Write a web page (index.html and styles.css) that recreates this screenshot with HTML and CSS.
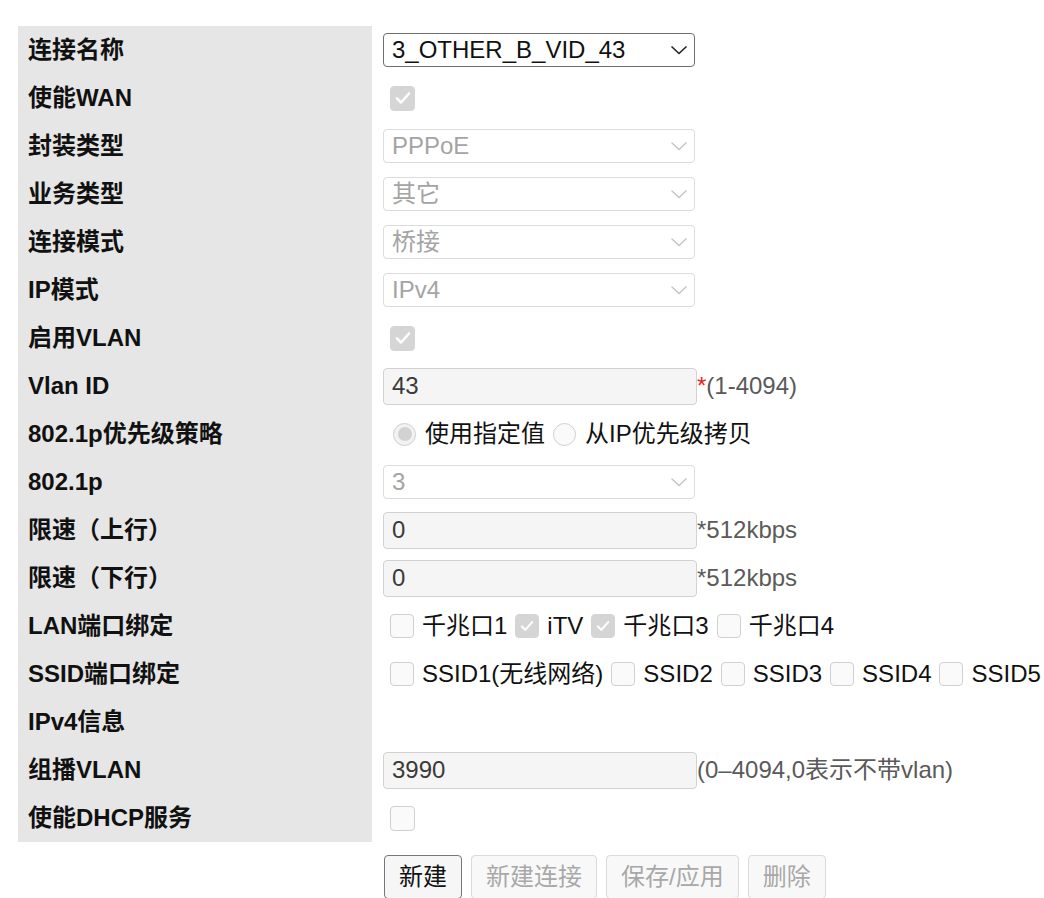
FILE: index.html
```html
<!DOCTYPE html>
<html lang="zh-CN">
<head>
<meta charset="utf-8">
<title>WAN 连接</title>
<link rel="stylesheet" href="styles.css">
</head>
<body>
<div class="page">
  <div class="form">
    <div class="row">
      <div class="label">连接名称</div>
      <div class="value">
        <div class="select active"><span>3_OTHER_B_VID_43</span><svg class="chev" width="18" height="10" viewBox="0 0 18 10"><polyline points="1.5,1.5 9,8.5 16.5,1.5" fill="none" stroke="currentColor" stroke-width="1.6"/></svg></div>
      </div>
    </div>
    <div class="row">
      <div class="label">使能WAN</div>
      <div class="value"><span class="cb big checked"><svg width="16" height="14" viewBox="0 0 16 14"><polyline points="2,7.5 6,11.5 14,2.5" fill="none" stroke="#fff" stroke-width="2.6" stroke-linecap="round" stroke-linejoin="round"/></svg></span></div>
    </div>
    <div class="row">
      <div class="label">封装类型</div>
      <div class="value">
        <div class="select"><span>PPPoE</span><svg class="chev" width="18" height="10" viewBox="0 0 18 10"><polyline points="1.5,1.5 9,8.5 16.5,1.5" fill="none" stroke="currentColor" stroke-width="1.3"/></svg></div>
      </div>
    </div>
    <div class="row">
      <div class="label">业务类型</div>
      <div class="value">
        <div class="select"><span>其它</span><svg class="chev" width="18" height="10" viewBox="0 0 18 10"><polyline points="1.5,1.5 9,8.5 16.5,1.5" fill="none" stroke="currentColor" stroke-width="1.3"/></svg></div>
      </div>
    </div>
    <div class="row">
      <div class="label">连接模式</div>
      <div class="value">
        <div class="select"><span>桥接</span><svg class="chev" width="18" height="10" viewBox="0 0 18 10"><polyline points="1.5,1.5 9,8.5 16.5,1.5" fill="none" stroke="currentColor" stroke-width="1.3"/></svg></div>
      </div>
    </div>
    <div class="row">
      <div class="label">IP模式</div>
      <div class="value">
        <div class="select"><span>IPv4</span><svg class="chev" width="18" height="10" viewBox="0 0 18 10"><polyline points="1.5,1.5 9,8.5 16.5,1.5" fill="none" stroke="currentColor" stroke-width="1.3"/></svg></div>
      </div>
    </div>
    <div class="row">
      <div class="label">启用VLAN</div>
      <div class="value"><span class="cb big checked"><svg width="16" height="14" viewBox="0 0 16 14"><polyline points="2,7.5 6,11.5 14,2.5" fill="none" stroke="#fff" stroke-width="2.6" stroke-linecap="round" stroke-linejoin="round"/></svg></span></div>
    </div>
    <div class="row">
      <div class="label">Vlan ID</div>
      <div class="value">
        <div class="input">43</div><span class="hint"><span class="req">*</span>(1-4094)</span>
      </div>
    </div>
    <div class="row">
      <div class="label">802.1p优先级策略</div>
      <div class="value">
        <div class="radios">
          <span class="opt"><span class="radio checked"><span class="dot"></span></span><span>使用指定值</span></span>
          <span class="opt"><span class="radio"></span><span>从IP优先级拷贝</span></span>
        </div>
      </div>
    </div>
    <div class="row">
      <div class="label">802.1p</div>
      <div class="value">
        <div class="select"><span>3</span><svg class="chev" width="18" height="10" viewBox="0 0 18 10"><polyline points="1.5,1.5 9,8.5 16.5,1.5" fill="none" stroke="currentColor" stroke-width="1.3"/></svg></div>
      </div>
    </div>
    <div class="row">
      <div class="label">限速（上行）</div>
      <div class="value"><div class="input">0</div><span class="hint">*512kbps</span></div>
    </div>
    <div class="row">
      <div class="label">限速（下行）</div>
      <div class="value"><div class="input">0</div><span class="hint">*512kbps</span></div>
    </div>
    <div class="row">
      <div class="label">LAN端口绑定</div>
      <div class="value">
        <div class="opts">
          <span class="opt"><span class="cb"></span><span>千兆口1</span></span>
          <span class="opt"><span class="cb checked"><svg width="14" height="12" viewBox="0 0 16 14"><polyline points="2,7.5 6,11.5 14,2.5" fill="none" stroke="#fff" stroke-width="2.4" stroke-linecap="round" stroke-linejoin="round"/></svg></span><span>iTV</span></span>
          <span class="opt"><span class="cb checked"><svg width="14" height="12" viewBox="0 0 16 14"><polyline points="2,7.5 6,11.5 14,2.5" fill="none" stroke="#fff" stroke-width="2.4" stroke-linecap="round" stroke-linejoin="round"/></svg></span><span>千兆口3</span></span>
          <span class="opt"><span class="cb"></span><span>千兆口4</span></span>
        </div>
      </div>
    </div>
    <div class="row">
      <div class="label">SSID端口绑定</div>
      <div class="value">
        <div class="opts">
          <span class="opt"><span class="cb"></span><span>SSID1(无线网络)</span></span>
          <span class="opt"><span class="cb"></span><span>SSID2</span></span>
          <span class="opt"><span class="cb"></span><span>SSID3</span></span>
          <span class="opt"><span class="cb"></span><span>SSID4</span></span>
          <span class="opt"><span class="cb"></span><span>SSID5</span></span>
        </div>
      </div>
    </div>
    <div class="row">
      <div class="label">IPv4信息</div>
      <div class="value"></div>
    </div>
    <div class="row">
      <div class="label">组播VLAN</div>
      <div class="value"><div class="input">3990</div><span class="hint">(0–4094,0表示不带vlan)</span></div>
    </div>
    <div class="row">
      <div class="label">使能DHCP服务</div>
      <div class="value"><span class="cb big"></span></div>
    </div>
  </div>
  <div class="actions">
    <button class="btn primary" type="button">新建</button>
    <button class="btn" type="button" disabled>新建连接</button>
    <button class="btn" type="button" disabled>保存/应用</button>
    <button class="btn" type="button" disabled>删除</button>
  </div>
</div>
</body>
</html>
```

FILE: styles.css
```css
html, body {
  margin: 0;
  padding: 0;
  background: #ffffff;
}

body {
  font-family: "Liberation Sans", "Noto Sans CJK SC", sans-serif;
  font-size: 24px;
  color: #111111;
  overflow: hidden;
}

.page {
  padding: 26px 0 0 18px;
}

.form {
  display: flex;
  flex-direction: column;
}

.row {
  display: grid;
  grid-template-columns: 354px 1fr;
  height: 48px;
}

.label {
  background: #e6e6e6;
  display: flex;
  align-items: center;
  padding-left: 10px;
  font-weight: 700;
  color: #111111;
  line-height: 1;
  white-space: nowrap;
}

.value {
  display: flex;
  align-items: center;
  padding-left: 11px;
  white-space: nowrap;
  line-height: 1;
}

.select {
  box-sizing: border-box;
  width: 312px;
  height: 34px;
  border: 1px solid #dcdcdc;
  border-radius: 4px;
  background: #ffffff;
  display: flex;
  align-items: center;
  justify-content: space-between;
  padding: 0 6px 0 8px;
  color: #a4a4a4;
}

.select.active {
  border-color: #6f6f6f;
  color: #111111;
}

.chev {
  color: #c4c4c4;
  display: block;
}

.select.active .chev {
  color: #222222;
}

.input {
  box-sizing: border-box;
  width: 314px;
  height: 37px;
  border: 1px solid #d2d2d2;
  border-radius: 4px;
  background: #f5f5f5;
  display: flex;
  align-items: center;
  padding-left: 8px;
  color: #3a3a3a;
}

.hint {
  color: #5a5a5a;
}

.req {
  color: #e8221b;
}

.cb {
  box-sizing: border-box;
  width: 24px;
  height: 24px;
  border: 1px solid #d0d0d0;
  border-radius: 4px;
  background: #fafafa;
  display: inline-flex;
  align-items: center;
  justify-content: center;
  flex: none;
}

.cb.big {
  width: 25px;
  height: 25px;
  margin-left: 7px;
}

.cb.checked {
  background: #d5d5d5;
  border-color: #d5d5d5;
}

.opts {
  display: flex;
  align-items: center;
  gap: 8px;
  margin-left: 7px;
}

.opt {
  display: inline-flex;
  align-items: center;
  gap: 8px;
}

.radios {
  display: flex;
  align-items: center;
  gap: 8px;
  margin-left: 10px;
}

.radios .opt {
  gap: 9px;
}

.radio {
  box-sizing: border-box;
  width: 23px;
  height: 23px;
  border-radius: 50%;
  border: 1px solid #d0d0d0;
  background: #fafafa;
  display: inline-flex;
  align-items: center;
  justify-content: center;
  flex: none;
}

.radio.checked {
  background: #f2f2f2;
  border-color: #cfcfcf;
}

.dot {
  width: 14px;
  height: 14px;
  border-radius: 50%;
  background: #d2d2d2;
}

.actions {
  display: flex;
  gap: 9px;
  margin: 13px 0 0 366px;
}

.btn {
  box-sizing: border-box;
  height: 44px;
  padding: 0 14px;
  border: 1px solid #dadada;
  border-radius: 4px;
  background: #f8f8f8;
  color: #a8a8a8;
  font-family: "Liberation Sans", "Noto Sans CJK SC", sans-serif;
  font-size: 24px;
  line-height: 1;
}

.btn.primary {
  border-color: #767676;
  color: #111111;
  background: #f6f6f6;
}
```
